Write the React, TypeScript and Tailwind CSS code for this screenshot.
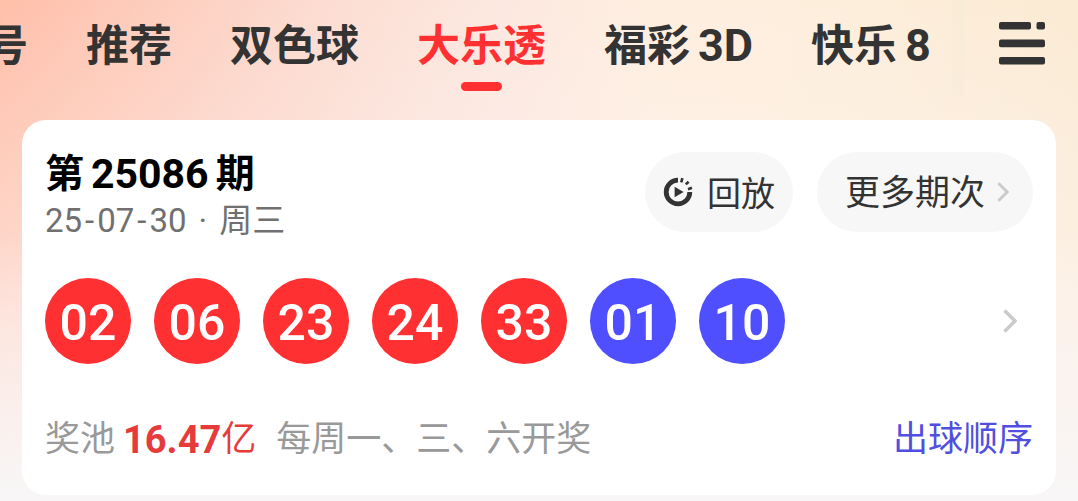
/**
 * Lottery Result Page
 *
 * Game tabs and the latest draw card
 */

import clsx from 'clsx'

interface Tab {
  id: string
  name: string
  suffix?: string
}

const tabs: Tab[] = [
  { id: 'number', name: '号' },
  { id: 'recommend', name: '推荐' },
  { id: 'ssq', name: '双色球' },
  { id: 'dlt', name: '大乐透' },
  { id: 'fc3d', name: '福彩', suffix: '3D' },
  { id: 'kl8', name: '快乐', suffix: '8' },
]

const draw = {
  issue: '25086',
  date: ['25', '07', '30'],
  weekday: '周三',
  front: ['02', '06', '23', '24', '33'],
  back: ['01', '10'],
  pool: '16.47',
}

function MenuIcon() {
  return (
    <svg width="46" height="43" viewBox="0 0 46 43" fill="#333333" aria-hidden="true">
      <rect x="0" y="0" width="32" height="7.6" rx="2" />
      <rect x="37.5" y="0" width="8.5" height="7.6" rx="2" />
      <rect x="0" y="17.6" width="46" height="7.6" rx="2" />
      <rect x="0" y="35" width="46" height="7.6" rx="2" />
    </svg>
  )
}

function ReplayIcon() {
  return (
    <svg width="30" height="30" viewBox="0 0 30 30" fill="none" aria-hidden="true">
      <path d="M15 3.2A11.8 11.8 0 1 0 26.8 15" stroke="#333333" strokeWidth="4.8" />
      <path
        d="M19.4 1.2L18.2 5.4M25.6 4.8L22.8 7.4M29 10.8L25 12.2"
        stroke="#333333"
        strokeWidth="2.6"
      />
      <path d="M11.6 9.8L20.6 15L11.6 20.2Z" fill="#333333" />
    </svg>
  )
}

function Chevron({ className }: { className?: string }) {
  return (
    <svg className={className} viewBox="0 0 14 24" fill="none" aria-hidden="true">
      <path d="M1.5 1.5L12 12L1.5 22.5" stroke="#cbcbcb" strokeWidth="3.6" />
    </svg>
  )
}

function Ball({ value, color }: { value: string; color: 'red' | 'blue' }) {
  return (
    <li
      className={clsx(
        'flex size-[86px] items-center justify-center rounded-full pt-1 text-[50px] font-medium text-white',
        color === 'red' ? 'bg-[#ff3031]' : 'bg-[#504fff]'
      )}
    >
      {value}
    </li>
  )
}

export default function App() {
  const activeTab = 'dlt'

  return (
    <div className="bg-[linear-gradient(to_right,#ffbfa9_0%,#fdd0c1_17%,#fcdfd5_33%,#fce8e0_46%,#feeee0_60%,#fdeedb_80%,#fbebd4_100%)] font-[Roboto,'Noto_Sans_CJK_SC',sans-serif]">
      <div className="bg-[linear-gradient(to_bottom,#fdf5f400_0%,#fdf5f433_24%,#fdf5f466_46%,#fdf5f4a6_60%,#fbf5f4cc_72%,#f8f6f6_98%)] pb-[6px]">
        <header className="flex items-start">
          <nav className="flex flex-1 gap-[58px] overflow-hidden pt-4 pb-[29px]">
            {tabs.map((tab, index) => (
              <button
                key={tab.id}
                className={clsx(
                  'flex shrink-0 flex-col items-center text-[43px] leading-[60px] font-bold',
                  index === 0 && '-ml-[15px]',
                  tab.id === activeTab ? 'text-[#ff3031]' : 'text-[#333333]'
                )}
              >
                <span className="flex gap-2">
                  {tab.name}
                  {tab.suffix && <span className="text-[45px]">{tab.suffix}</span>}
                </span>
                {tab.id === activeTab && (
                  <span className="mt-[6px] h-[9px] w-[41px] rounded-full bg-[#ff3031]" />
                )}
              </button>
            ))}
          </nav>
          <div className="h-[96px] w-5 shrink-0 bg-linear-to-r from-transparent to-[#ece9d040]" />
          <button aria-label="菜单" className="shrink-0 pt-[22px] pr-[33px] pl-[35px]">
            <MenuIcon />
          </button>
        </header>

        <main className="mx-[22px] rounded-[24px] bg-white px-[23px] pt-[30px] pb-[31px]">
          <div className="flex items-start justify-between">
            <div>
              <h1 className="flex gap-[7px] text-[39px] leading-[48px] font-bold text-black">
                <span>第</span>
                <span className="text-[41px]">{draw.issue}</span>
                <span>期</span>
              </h1>
              <p className="flex text-[33px] leading-[46px] text-[#707070]">
                {draw.date.map((part, index) => (
                  <span key={part}>
                    {index > 0 && <span className="mx-[3px]">-</span>}
                    {part}
                  </span>
                ))}
                <span className="mx-3">·</span>
                <span>{draw.weekday}</span>
              </p>
            </div>
            <div className="mt-[2px] flex gap-6 text-[#333333]">
              <button className="flex h-20 items-center gap-[14px] rounded-full bg-[#f7f7f7] px-[18px] text-[34px]">
                <ReplayIcon />
                <span className="pt-1">回放</span>
              </button>
              <button className="flex h-20 items-center gap-3 rounded-full bg-[#f7f7f7] pr-6 pl-7 text-[35px]">
                <span className="pt-1">更多期次</span>
                <Chevron className="h-5 w-3" />
              </button>
            </div>
          </div>

          <div className="mt-[34px] flex items-center justify-between">
            <ul className="flex gap-[23px]">
              {draw.front.map((value) => (
                <Ball key={value} value={value} color="red" />
              ))}
              {draw.back.map((value) => (
                <Ball key={value} value={value} color="blue" />
              ))}
            </ul>
            <button aria-label="开奖详情" className="pr-4">
              <Chevron className="h-6 w-[14px]" />
            </button>
          </div>

          <div className="mt-[52px] flex items-center justify-between text-[35px] leading-[48px]">
            <p className="flex text-[#999999]">
              <span>奖池</span>
              <span className="ml-2 flex text-[#e63b3b]">
                <span className="text-[38px] font-bold">{draw.pool}</span>
                <span>亿</span>
              </span>
              <span className="ml-5">每周一、三、六开奖</span>
            </p>
            <a href="#order" className="text-[#504fdf]">
              出球顺序
            </a>
          </div>
        </main>
      </div>
    </div>
  )
}
